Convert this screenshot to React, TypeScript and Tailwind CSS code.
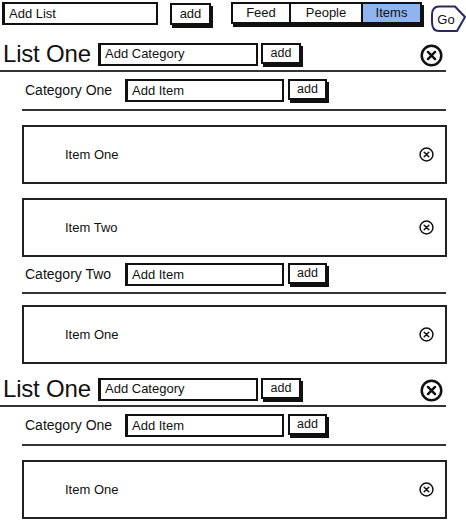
import React from 'react';

type Category = { name: string; items: string[] };
type List = { name: string; categories: Category[] };

const lists: List[] = [
  {
    name: 'List One',
    categories: [
      { name: 'Category One', items: ['Item One', 'Item Two'] },
      { name: 'Category Two', items: ['Item One'] },
    ],
  },
  {
    name: 'List One',
    categories: [{ name: 'Category One', items: ['Item One'] }],
  },
];

function CloseIcon({ size, stroke }: { size: number; stroke: number }) {
  return (
    <svg width={size} height={size} viewBox="0 0 24 24" fill="none">
      <circle cx="12" cy="12" r={12 - stroke / 2 - 0.5} stroke="#111" strokeWidth={stroke} />
      <path d="M8.3 8.3 L15.7 15.7 M15.7 8.3 L8.3 15.7" stroke="#111" strokeWidth={stroke} strokeLinecap="round" />
    </svg>
  );
}

function TextBox({ placeholder, width, height }: { placeholder: string; width: string; height: string }) {
  return (
    <div className={`${width} ${height} border-2 border-l-[3px] border-[#111] bg-white flex items-center pl-[4px] text-[13px] text-[#111]`}>
      {placeholder}
    </div>
  );
}

function AddButton({ width, className = '' }: { width: string; className?: string }) {
  return (
    <button className={`${width} h-[21px] border-2 border-[#111] bg-white shadow-[2px_3px_0_0_#111] flex items-center justify-center text-[12.5px] text-[#111] ${className}`}>
      add
    </button>
  );
}

function GoButton() {
  return (
    <div className="relative w-[36px] h-[29px] flex items-center justify-center">
      <svg className="absolute inset-0" width="36" height="29" viewBox="0 0 36 29" fill="none">
        <path
          d="M9 2.5 H25 L35 13 L27 27 H9 Q2 27 2 18 V11 Q2 2.5 9 2.5 Z"
          fill="white"
          stroke="#2a2966"
          strokeWidth="2"
          strokeLinejoin="round"
        />
      </svg>
      <span className="relative text-[13px] text-[#111] pr-[4px] pt-[2px]">Go</span>
    </div>
  );
}

export default function App() {
  return (
    <div className="w-[466px] h-[522px] overflow-hidden bg-white text-[#111]" style={{ fontFamily: "'Liberation Sans', Arial, sans-serif" }}>
      {/* top bar */}
      <div className="h-[29px] flex items-start pt-[2px]">
        <div className="ml-[2px]">
          <TextBox placeholder="Add List" width="w-[156px]" height="h-[23px]" />
        </div>
        <AddButton width="w-[41px]" className="ml-[12px] mt-[1px] h-[22px] text-[13px]" />
        <div className="ml-[20px] flex h-[22px] border-2 border-[#111] shadow-[2px_3px_0_0_#111] text-[13px]">
          <div className="w-[58px] flex items-center justify-center border-r-2 border-[#111]">Feed</div>
          <div className="w-[72px] flex items-center justify-center border-r-2 border-[#111]">People</div>
          <div className="w-[57px] flex items-center justify-center bg-[#90b4ee]">Items</div>
        </div>
        <div className="ml-[8px] mt-[2px]">
          <GoButton />
        </div>
      </div>

      {lists.map((list, li) => (
        <div key={li} className="w-[447px] pt-[9px]">
          <div className="h-[32px] flex items-center">
            <div className="w-[98px] pl-[3px] text-[24px] leading-none tracking-[-0.2px]">{list.name}</div>
            <TextBox placeholder="Add Category" width="w-[160px]" height="h-[23px]" />
            <AddButton width="w-[40px]" className="ml-[3px] mb-[2px]" />
            <div className="ml-auto mr-[4px] mt-[3px]">
              <CloseIcon size={23} stroke={2.6} />
            </div>
          </div>
          <div className="h-[2px] bg-[#333] w-[446px]" />

          <div className="ml-[22px]">
            {list.categories.map((cat, ci) => (
              <div key={ci}>
                <div className={`${ci === 0 ? 'h-[37px]' : 'h-[35px]'} flex items-center`}>
                  <div className="w-[103px] pl-[3px] text-[14px]">{cat.name}</div>
                  <TextBox placeholder="Add Item" width="w-[159px]" height="h-[23px]" />
                  <AddButton width="w-[39px]" className="ml-[4px] mb-[2px]" />
                </div>
                <div className="h-[2px] bg-[#333] w-[424px]" />
                <div className={`flex flex-col gap-[14px] ${ci === 0 ? 'mt-[14px]' : 'mt-[11px]'}`}>
                  {cat.items.map((item, ii) => (
                    <div key={ii} className="w-[425px] h-[59px] border-2 border-[#222] flex items-center pl-[41px] pr-[11px] text-[13px]">
                      <span>{item}</span>
                      <div className="ml-auto">
                        <CloseIcon size={15} stroke={2.4} />
                      </div>
                    </div>
                  ))}
                </div>
              </div>
            ))}
          </div>
        </div>
      ))}
    </div>
  );
}
